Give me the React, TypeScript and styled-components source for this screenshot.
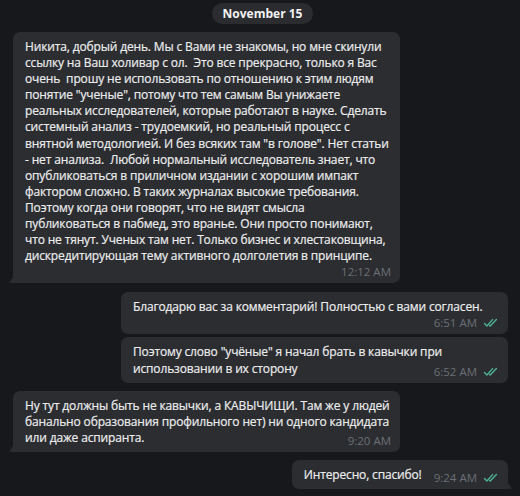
import React from "react";
import styled, { createGlobalStyle, css } from "styled-components";

const Global = createGlobalStyle`
  html, body {
    margin: 0;
    padding: 0;
    background: #17181b;
  }
  body {
    font-family: "Open Sans", "Noto Sans", sans-serif;
    -webkit-font-smoothing: antialiased;
  }
`;

const Chat = styled.div`
  width: 520px;
  height: 496px;
  box-sizing: border-box;
  padding: 3px 12px 0 13px;
  display: flex;
  flex-direction: column;
  background: #17181b;
  overflow: hidden;
`;

const DateRow = styled.div`
  display: flex;
  justify-content: center;
`;

const DatePill = styled.div`
  height: 21px;
  line-height: 21px;
  padding: 0 11px;
  border-radius: 11px;
  background: #2a2c30;
  color: #f2f2f2;
  font-size: 12px;
  font-weight: 700;
  margin-left: 4px;
`;

const Row = styled.div<{ $out?: boolean; $gap: number }>`
  display: flex;
  justify-content: ${(p) => (p.$out ? "flex-end" : "flex-start")};
  margin-top: ${(p) => p.$gap}px;
`;

const Bubble = styled.div<{ $out?: boolean; $wide?: boolean; $tail?: boolean }>`
  position: relative;
  box-sizing: border-box;
  width: ${(p) => (p.$wide ? "387px" : "auto")};
  padding: 7px 9px 3px 12px;
  background: #2b2d31;
  border-radius: 7px;
  display: flow-root;
  ${(p) =>
    p.$tail &&
    (p.$out
      ? css`
          border-bottom-right-radius: 0;
          &::after {
            content: "";
            position: absolute;
            right: -4px;
            bottom: 0;
            width: 4px;
            height: 6px;
            background: #2b2d31;
            clip-path: polygon(0 0, 0 100%, 100% 100%);
          }
        `
      : css`
          border-bottom-left-radius: 0;
          &::after {
            content: "";
            position: absolute;
            left: -4px;
            bottom: 0;
            width: 4px;
            height: 6px;
            background: #2b2d31;
            clip-path: polygon(100% 0, 0 100%, 100% 100%);
          }
        `)}
`;

const Text = styled.div`
  color: #ececed;
  font-family: "Open Sans", "Noto Sans", sans-serif;
  font-size: 12px;
  letter-spacing: -0.15px;
  font-weight: 400;
  -webkit-text-stroke: 0.2px #ececed;
  line-height: 16.1px;
  white-space: pre;
`;

const Meta = styled.span<{ $inline?: boolean }>`
  display: ${(p) => (p.$inline ? "inline-flex" : "flex")};
  justify-content: flex-end;
  align-items: center;
  gap: 6px;
  height: 16px;
  color: #6c7076;
  font-family: "Open Sans", sans-serif;
  font-size: 11.5px;
  font-weight: 400;
  letter-spacing: 0;
  -webkit-text-stroke: 0;
  line-height: 16px;
  ${(p) =>
    p.$inline &&
    css`
      float: right;
      margin: 3px 0 0 12px;
    `}
`;

const Check = () => (
  <svg width="16" height="10" viewBox="0 0 16 10" fill="none">
    <path
      d="M1.5 5.6 L3.9 8 L9.6 1.6 M6.6 7.4 L7.2 8 L13.4 1.6"
      stroke="#4db394"
      strokeWidth="1.4"
      strokeLinecap="round"
      strokeLinejoin="round"
    />
  </svg>
);

type Msg = {
  out?: boolean;
  wide?: boolean;
  tail?: boolean;
  gap: number;
  lines: string[];
  time: string;
  inlineMeta?: boolean;
};

const messages: Msg[] = [
  {
    gap: 8,
    wide: true,
    tail: true,
    time: "12:12 AM",
    lines: [
      "Никита, добрый день. Мы с Вами не знакомы, но мне скинули",
      "ссылку на Ваш холивар с ол.  Это все прекрасно, только я Вас",
      "очень  прошу не использовать по отношению к этим людям",
      "понятие \"ученые\", потому что тем самым Вы унижаете",
      "реальных исследователей, которые работают в науке. Сделать",
      "системный анализ - трудоемкий, но реальный процесс с",
      "внятной методологией. И без всяких там \"в голове\". Нет статьи",
      "- нет анализа.  Любой нормальный исследователь знает, что",
      "опубликоваться в приличном издании с хорошим импакт",
      "фактором сложно. В таких журналах высокие требования.",
      "Поэтому когда они говорят, что не видят смысла",
      "публиковаться в пабмед, это вранье. Они просто понимают,",
      "что не тянут. Ученых там нет. Только бизнес и хлестаковщина,",
      "дискредитирующая тему активного долголетия в принципе.",
    ],
  },
  {
    out: true,
    wide: true,
    gap: 9,
    time: "6:51 AM",
    lines: ["Благодарю вас за комментарий! Полностью с вами согласен."],
  },
  {
    out: true,
    wide: true,
    gap: 3,
    time: "6:52 AM",
    inlineMeta: true,
    lines: [
      "Поэтому слово \"учёные\" я начал брать в кавычки при",
      "использовании в их сторону",
    ],
  },
  {
    wide: true,
    tail: true,
    gap: 8,
    time: "9:20 AM",
    inlineMeta: true,
    lines: [
      "Ну тут должны быть не кавычки, а КАВЫЧИЩИ. Там же у людей",
      "банально образования профильного нет) ни одного кандидата",
      "или даже аспиранта.",
    ],
  },
  {
    out: true,
    tail: true,
    gap: 8,
    time: "9:24 AM",
    inlineMeta: true,
    lines: ["Интересно, спасибо!"],
  },
];

export default function App() {
  return (
    <>
      <Global />
      <Chat>
        <DateRow>
          <DatePill>November 15</DatePill>
        </DateRow>
        {messages.map((m, i) => (
          <Row key={i} $out={m.out} $gap={m.gap}>
            <Bubble $out={m.out} $wide={m.wide} $tail={m.tail}>
              <Text>
                {m.lines.map((l, j) => (
                  <React.Fragment key={j}>
                    {j > 0 && <br />}
                    {l}
                  </React.Fragment>
                ))}
                <Meta $inline={m.inlineMeta}>
                  <span>{m.time}</span>
                  {m.out && <Check />}
                </Meta>
              </Text>
            </Bubble>
          </Row>
        ))}
      </Chat>
    </>
  );
}
